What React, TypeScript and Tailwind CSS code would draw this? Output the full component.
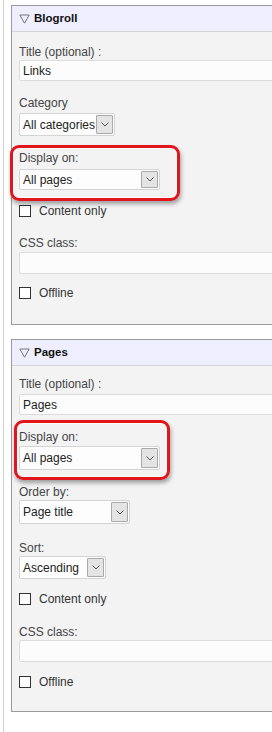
import React from "react";

const font = "font-['Liberation_Sans',Arial,sans-serif]";

function Triangle() {
  return (
    <svg width="11" height="10" viewBox="0 0 11 10" className="shrink-0">
      <path d="M0.8 1 H10.2 L5.5 9.2 Z" fill="none" stroke="#777" strokeWidth="1" strokeLinejoin="round" />
    </svg>
  );
}

function Chevron() {
  return (
    <svg width="8" height="5" viewBox="0 0 8 5">
      <path d="M0.5 0.5 L4 4 L7.5 0.5" fill="none" stroke="#555" strokeWidth="1" />
    </svg>
  );
}

function Label({ text, className = "" }: { text: string; className?: string }) {
  return <div className={`h-[14px] leading-[14px] text-[12px] text-[#444] ${className}`}>{text}</div>;
}

function TextInput({ value = "", className = "" }: { value?: string; className?: string }) {
  return (
    <div
      className={`w-[290px] border border-[#dcdcdc] rounded-[2px] bg-[#fcfcfc] pl-[3px] flex items-center text-[12px] text-[#222] ${className}`}
    >
      {value}
    </div>
  );
}

function Select({ value, width, className = "" }: { value: string; width: string; className?: string }) {
  return (
    <div
      className={`${width} border border-[#d4d4d4] rounded-[2px] bg-[#fdfdfd] flex items-stretch text-[12px] text-[#222] ${className}`}
    >
      <div className="flex-1 flex items-center pl-[3px]">{value}</div>
      <div className="w-[17px] my-[1px] mr-[1px] border border-[#a9a9a9] rounded-[1px] bg-[#e4e4e4] flex items-center justify-center">
        <Chevron />
      </div>
    </div>
  );
}

function Check({ text, className = "" }: { text: string; className?: string }) {
  return (
    <div className={`h-[14px] flex items-center text-[12px] text-[#333] ${className}`}>
      <div className="w-[12px] h-[12px] border border-[#333] bg-white" />
      <span className="ml-[8px]">{text}</span>
    </div>
  );
}

function Header({ title }: { title: string }) {
  return (
    <div className="h-[26px] bg-[#eeeefe] border-b border-[#d4d4d4] flex items-center gap-[4px] pl-[7px]">
      <Triangle />
      <span className="text-[11.5px] font-bold text-[#111]">{title}</span>
    </div>
  );
}

function Highlight({ className }: { className: string }) {
  return (
    <div
      className={`absolute border-[3px] border-[#e0161c] rounded-[9px] shadow-[inset_0_0_0_1px_rgba(255,255,255,0.9),1px_3px_4px_rgba(0,0,0,0.35)] ${className}`}
    />
  );
}

export default function App() {
  return (
    <div className={`w-[272px] h-[732px] overflow-hidden bg-white pl-[3px] ${font}`}>
      <div className="h-full border-l border-[#d0d0d0] pl-[7px] pt-[5px]">
        {/* Blogroll */}
        <div className="w-[300px] border border-[#9a9a9a] bg-[#f3f3f3]">
          <Header title="Blogroll" />
          <div className="pl-[7px] pt-[13px] pb-[24px]">
            <Label text="Title (optional) :" />
            <TextInput value="Links" className="mt-[1px] h-[21px]" />

            <Label text="Category" className="mt-[15px]" />
            <Select value="All categories" width="w-[96px]" className="mt-[3px] h-[23px]" />

            <div className="relative mt-[15px]">
              <Label text="Display on:" />
              <Select value="All pages" width="w-[141px]" className="mt-[4px] h-[21px]" />
              <Highlight className="-left-[9px] -top-[6px] w-[170px] h-[56px]" />
            </div>

            <Check text="Content only" className="mt-[14px]" />

            <Label text="CSS class:" className="mt-[18px]" />
            <TextInput className="mt-[2px] h-[22px]" />

            <Check text="Offline" className="mt-[12px]" />
          </div>
        </div>

        {/* Pages */}
        <div className="w-[300px] mt-[14px] border border-[#9a9a9a] bg-[#f3f3f3]">
          <Header title="Pages" />
          <div className="pl-[7px] pt-[11px] pb-[22px]">
            <Label text="Title (optional) :" />
            <TextInput value="Pages" className="mt-[3px] h-[21px]" />

            <div className="relative mt-[15px]">
              <Label text="Display on:" />
              <Select value="All pages" width="w-[141px]" className="mt-[2px] h-[24px]" />
              <Highlight className="-left-[5px] -top-[10px] w-[156px] h-[60px]" />
            </div>

            <Label text="Order by:" className="mt-[15px]" />
            <Select value="Page title" width="w-[111px]" className="mt-[1px] h-[24px]" />

            <Label text="Sort:" className="mt-[17px]" />
            <Select value="Ascending" width="w-[87px]" className="mt-[1px] h-[23px]" />

            <Check text="Content only" className="mt-[13px]" />

            <Label text="CSS class:" className="mt-[19px]" />
            <TextInput className="mt-[1px] h-[22px]" />

            <Check text="Offline" className="mt-[13px]" />
          </div>
        </div>
      </div>
    </div>
  );
}
